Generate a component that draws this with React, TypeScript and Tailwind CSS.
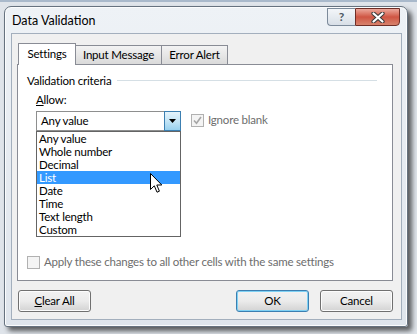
import type { ReactNode } from 'react'

const items = ['Any value', 'Whole number', 'Decimal', 'List', 'Date', 'Time', 'Text length', 'Custom']

function WinButton({ children, isDefault }: { children: ReactNode; isDefault?: boolean }) {
  return (
    <button
      className={
        'flex h-[22px] w-[73px] items-center justify-center rounded-[3px] border bg-gradient-to-b from-[#f2f2f2] via-[#ebebeb] to-[#d3d3d3] text-black ' +
        (isDefault
          ? 'border-[#3c7fb1] shadow-[inset_0_0_0_1px_#7fd1f4]'
          : 'border-[#707070] shadow-[inset_0_0_0_1px_#fcfcfc]')
      }
    >
      {children}
    </button>
  )
}

function Cursor() {
  return (
    <svg className="absolute left-[113px] top-[41px]" width="13" height="21" viewBox="0 0 13 21">
      <path
        d="M0.5 0.5 L0.5 16.5 L4.3 12.8 L7 19.2 L9.4 18.2 L6.8 12 L11.8 12 Z"
        fill="#ffffff"
        stroke="#000000"
        strokeWidth="1"
        strokeLinejoin="round"
      />
    </svg>
  )
}

export default function App() {
  return (
    <div
      className="h-[334px] w-[417px] overflow-hidden border-t-2 border-[#a9b9cb] bg-[#dfe4ea] pl-[4px] pt-[4px] text-[11.5px] tracking-[-0.2px]"
      style={{ fontFamily: 'Lato, "Noto Sans", sans-serif' }}
    >
      <div className="flex h-[321px] w-[404px] flex-col rounded-t-[7px] rounded-b-[3px] border border-[#66727f] bg-gradient-to-b from-[#eef2f6] via-[#e6ebf1] to-[#dfe5ec] shadow-[4px_4px_5px_rgba(0,0,0,0.6),inset_0_0_0_1px_#fbfcfd]">
        <div className="flex h-[26px] shrink-0 items-start">
          <span className="pl-[7px] pt-[6px] text-[12.5px] leading-[16px] tracking-normal text-black">Data Validation</span>
          <div className="ml-auto mr-[7px] mt-[1px] flex">
            <div className="flex h-[18px] w-[28px] items-center justify-center rounded-bl-[4px] border border-r-0 border-[#7c8a9a] bg-gradient-to-b from-[#f3f6f9] to-[#d8dfe7] text-[12px] font-bold leading-none text-[#4d5764]">
              ?
            </div>
            <div className="flex h-[18px] w-[45px] items-center justify-center rounded-br-[4px] border border-[#6f2e26] bg-gradient-to-b from-[#eba89c] via-[#cf5543] to-[#d7826c]">
              <svg width="14" height="11" viewBox="0 0 14 11">
                <path d="M2.5 1.5 L11.5 9.5 M11.5 1.5 L2.5 9.5" stroke="#3a3a3a" strokeWidth="4.2" strokeLinecap="round" />
                <path d="M2.5 1.5 L11.5 9.5 M11.5 1.5 L2.5 9.5" stroke="#ffffff" strokeWidth="2.2" strokeLinecap="round" />
              </svg>
            </div>
          </div>
        </div>

        <div className="ml-[6px] flex h-[287px] w-[391px] flex-col border border-[#a3afbd] bg-[#f0f0f0]">
          <div className="ml-[6px] mt-[9px] flex items-end">
            <div className="relative z-10 -mb-px flex h-[22px] w-[58px] items-center justify-center border border-b-0 border-[#898c95] bg-white pb-[2px] text-black">
              Settings
            </div>
            <div className="flex h-[19px] w-[86px] items-center justify-center border border-l-0 border-b-0 border-[#898c95] bg-gradient-to-b from-[#f3f3f3] to-[#dadada] text-black">
              Input Message
            </div>
            <div className="flex h-[19px] w-[66px] items-center justify-center border border-l-0 border-b-0 border-[#898c95] bg-gradient-to-b from-[#f3f3f3] to-[#dadada] text-black">
              Error Alert
            </div>
          </div>

          <div className="ml-[5px] flex h-[217px] w-[376px] flex-col border border-[#898c95] bg-white px-[9px] text-black">
            <div className="mt-[8px] flex h-[16px] items-center">
              <span className="leading-[16px]">Validation criteria</span>
              <div className="ml-[6px] mr-[6px] h-[2px] flex-1 border-t border-b border-t-[#d5dfe5] border-b-white" />
            </div>
            <div className="ml-[9px] mt-[3px] leading-[16px]">
              <span className="underline">A</span>llow:
            </div>
            <div className="ml-[9px] mt-[3px] flex items-start">
              <div className="relative">
                <div className="flex h-[20px] w-[145px] items-center border border-[#8e8f8f] bg-white">
                  <span className="flex-1 pl-[4px] leading-[16px]">Any value</span>
                  <div className="-mr-px flex h-[20px] w-[17px] items-center justify-center border border-[#3c7fb1] bg-gradient-to-b from-[#e5f4fc] via-[#c4e5f6] to-[#98d1ef]">
                    <svg width="7" height="4" viewBox="0 0 7 4">
                      <path d="M0 0 L7 0 L3.5 4 Z" fill="#000000" />
                    </svg>
                  </div>
                </div>
                <div className="absolute left-0 top-[20px] z-20 w-[145px] border border-[#646464] bg-white">
                  {items.map((item) => (
                    <div
                      key={item}
                      className={
                        'h-[13px] pl-[2px] leading-[13px] ' +
                        (item === 'List' ? 'bg-[#3399ff] text-white' : 'text-black')
                      }
                    >
                      {item}
                    </div>
                  ))}
                  <Cursor />
                </div>
              </div>
              <div className="ml-[10px] mt-[1px] flex items-center">
                <div className="flex h-[13px] w-[13px] items-center justify-center border border-[#b1b1b1] bg-[#f4f4f4]">
                  <svg width="9" height="9" viewBox="0 0 9 9">
                    <path d="M1 4.5 L3.5 7.2 L8 1" fill="none" stroke="#a6a6a6" strokeWidth="1.6" />
                  </svg>
                </div>
                <span className="ml-[4px] leading-[16px] text-[#6d6d6d]">Ignore blank</span>
              </div>
            </div>

            <div className="mb-[10px] mt-auto flex items-center">
              <div className="h-[13px] w-[13px] border border-[#b1b1b1] bg-[#f4f4f4]" />
              <span className="ml-[4px] leading-[16px] text-[#6d6d6d]">
                Apply these changes to all other cells with the same settings
              </span>
            </div>
          </div>

          <div className="ml-[6px] mr-[8px] mt-[9px] flex">
            <WinButton>
              <span>
                <span className="underline">C</span>lear All
              </span>
            </WinButton>
            <div className="ml-auto flex gap-[11px]">
              <WinButton isDefault>OK</WinButton>
              <WinButton>Cancel</WinButton>
            </div>
          </div>
        </div>
      </div>
    </div>
  )
}
